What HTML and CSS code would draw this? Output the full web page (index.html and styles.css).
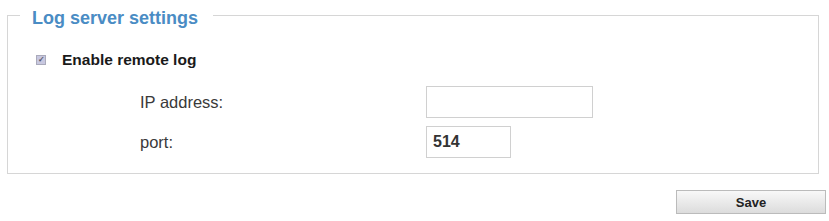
FILE: index.html
```html
<!DOCTYPE html>
<html lang="en">
<head>
    <meta charset="UTF-8">
    <title>Log server settings</title>
    <link rel="stylesheet" href="styles.css">
</head>
<body>
    <div class="page">
        <fieldset class="settings">
            <legend>Log server settings</legend>
            <label class="check-row">
                <span class="check-box">&#10003;</span>
                <span>Enable remote log</span>
            </label>
            <div class="field-row">
                <span class="field-label">IP address:</span>
                <input type="text" class="ip-input" value="">
            </div>
            <div class="field-row">
                <span class="field-label">port:</span>
                <input type="text" class="port-input" value="514">
            </div>
        </fieldset>
        <div class="actions">
            <button class="save-btn">Save</button>
        </div>
    </div>
</body>
</html>
```

FILE: styles.css
```css
body {
    margin: 0;
    background: #fff;
    font-family: "Liberation Sans", Arial, sans-serif;
    color: #222;
}

.page {
    padding: 2px 3px 0 7px;
}

.settings {
    margin: 0;
    width: 812px;
    box-sizing: border-box;
    height: 172px;
    border: 1px solid #d6d6d6;
    padding: 0;
}

.settings legend {
    margin-left: 12px;
    padding: 6px 15px 0 12px;
    font-size: 18px;
    font-weight: bold;
    color: #4a8cc4;
}

.check-row {
    display: flex;
    align-items: center;
    margin-top: 22px;
    padding-left: 28px;
    font-size: 15.5px;
    font-weight: bold;
    color: #1a1a1a;
}

.check-box {
    width: 8px;
    height: 8px;
    margin-right: 16px;
    border: 1px solid #aab;
    background: #c8c8e0;
    color: #556;
    font-size: 8px;
    line-height: 8px;
    text-align: center;
}

.field-row {
    display: flex;
    align-items: center;
    margin-top: 17px;
    font-size: 16.5px;
    color: #3a3a3a;
}

.field-row + .field-row {
    margin-top: 8px;
}

.field-label {
    width: 286px;
    padding-left: 132px;
}

.field-row input {
    box-sizing: border-box;
    height: 32px;
    border: 1px solid #d0d0d0;
    padding: 0 6px;
    font-family: "Liberation Sans", Arial, sans-serif;
    font-size: 16px;
    font-weight: bold;
    color: #333;
}

.ip-input {
    width: 167px;
}

.port-input {
    width: 85px;
}

.actions {
    display: flex;
    justify-content: flex-end;
    margin-top: 16px;
}

.save-btn {
    width: 150px;
    height: 24px;
    border: 1px solid #bbb;
    background: linear-gradient(#f8f8f8, #dcdcdc);
    font-family: "Liberation Sans", Arial, sans-serif;
    font-size: 13px;
    font-weight: bold;
    color: #222;
}
```
